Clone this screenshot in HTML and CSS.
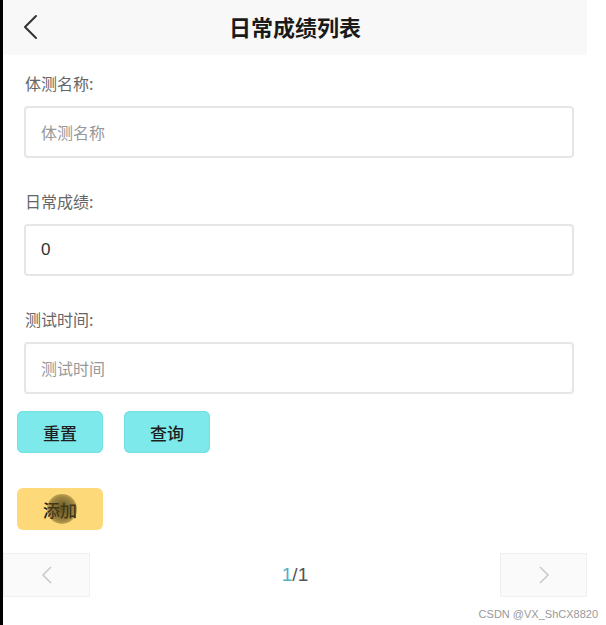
FILE: index.html
```html
<!DOCTYPE html>
<html lang="zh">
<head>
<meta charset="utf-8">
<title>日常成绩列表</title>
<link rel="stylesheet" href="styles.css">
</head>
<body>
<div class="page">
  <header class="topbar">
    <span class="back">
      <svg width="16" height="26" viewBox="0 0 16 26"><path d="M13 2 L2 13 L13 24" fill="none" stroke="#333" stroke-width="2" stroke-linecap="round" stroke-linejoin="round"/></svg>
    </span>
    <h1 class="title">日常成绩列表</h1>
    <span></span>
  </header>

  <form class="form">
    <div class="field">
      <label class="label">体测名称:</label>
      <div class="input placeholder">体测名称</div>
    </div>
    <div class="field">
      <label class="label">日常成绩:</label>
      <div class="input value">0</div>
    </div>
    <div class="field">
      <label class="label">测试时间:</label>
      <div class="input placeholder">测试时间</div>
    </div>
  </form>

  <div class="actions">
    <button class="btn btn-cyan" type="button">重置</button>
    <button class="btn btn-cyan" type="button">查询</button>
  </div>
  <div class="actions actions-add">
    <button class="btn btn-yellow" type="button">添加<span class="cursor"></span></button>
  </div>

  <nav class="pager">
    <span class="pbtn">
      <svg width="12" height="20" viewBox="0 0 12 20"><path d="M10 2 L2 10 L10 18" fill="none" stroke="#c8c8c8" stroke-width="1.5"/></svg>
    </span>
    <span class="pnum"><span class="cur">1</span>/1</span>
    <span class="pbtn">
      <svg width="12" height="20" viewBox="0 0 12 20"><path d="M2 2 L10 10 L2 18" fill="none" stroke="#c8c8c8" stroke-width="1.5"/></svg>
    </span>
  </nav>
</div>
<div class="mark">CSDN @VX_ShCX8820</div>
</body>
</html>
```

FILE: styles.css
```css
* { box-sizing: border-box; }
html, body { margin: 0; padding: 0; }
body {
  width: 606px;
  height: 625px;
  background: #fff;
  font-family: "Noto Sans CJK SC", "Noto Sans", sans-serif;
  position: relative;
  overflow: hidden;
  border-left: 3px solid #000;
}
.page {
  width: 584px;
}
.topbar {
  height: 55px;
  background: #f8f8f8;
  display: grid;
  grid-template-columns: 1fr auto 1fr;
  align-items: center;
}
.back {
  display: flex;
  align-items: center;
  padding-left: 20px;
  padding-bottom: 2px;
}
.title {
  margin: 0;
  font-size: 22px;
  font-weight: 700;
  color: #1a1a1a;
  line-height: 1;
  padding-bottom: 4px;
}
.form {
  padding: 16px 0 0 21px;
  display: flex;
  flex-direction: column;
  gap: 31px;
}
.field {
  display: flex;
  flex-direction: column;
  gap: 11px;
}
.label {
  font-size: 16px;
  line-height: 24px;
  color: #666;
  padding-left: 1px;
}
.input {
  width: 550px;
  height: 52px;
  border: 2px solid #e6e6e6;
  border-radius: 4px;
  display: flex;
  align-items: center;
  padding-left: 15px;
  font-size: 16px;
  background: #fff;
}
.placeholder { color: #999; }
.value { color: #333; font-family: "Liberation Sans", sans-serif; font-size: 17px; }
.actions {
  display: flex;
  gap: 21px;
  padding-left: 14px;
  margin-top: 17px;
}
.actions-add { margin-top: 35px; }
.btn {
  width: 86px;
  height: 42px;
  border: none;
  border-radius: 6px;
  font-family: "Noto Sans CJK SC", sans-serif;
  font-size: 17px;
  font-weight: 500;
  color: #1e1e1e;
  position: relative;
  padding: 0;
}
.btn-cyan { background: #7ee9eb; box-shadow: 0 0 0 1px #74dfe2 inset; }
.btn-yellow { background: #fdd979; }
.cursor {
  position: absolute;
  left: 30px;
  top: 6px;
  width: 30px;
  height: 30px;
  border-radius: 50%;
  background: radial-gradient(circle, rgba(70,60,20,0.85) 0%, rgba(90,75,25,0.6) 55%, rgba(120,100,40,0) 100%);
}
.pager {
  margin-top: 23px;
  display: flex;
  justify-content: space-between;
  align-items: center;
}
.pbtn {
  width: 87px;
  height: 44px;
  background: #fafafa;
  border: 1px solid #f0f0f0;
  display: flex;
  align-items: center;
  justify-content: center;
}
.pnum {
  font-family: "Liberation Sans", sans-serif;
  font-size: 19px;
  color: #555;
}
.cur { color: #4ab4c4; }
.mark {
  position: absolute;
  right: 8px;
  bottom: 5px;
  font-family: "Liberation Sans", sans-serif;
  font-size: 11px;
  color: #999;
}
```
